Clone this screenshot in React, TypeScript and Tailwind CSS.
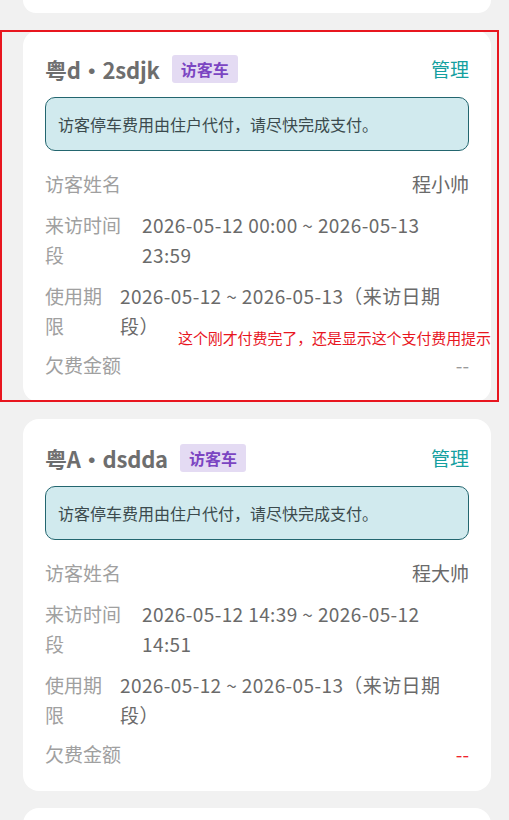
import React from 'react';

interface Visit {
  plate: string;
  name: string;
  visitTime: string;
  usePeriod: string;
  debtRed: boolean;
}

const visits: Visit[] = [
  {
    plate: '粤d・2sdjk',
    name: '程小帅',
    visitTime: '2026-05-12 00:00 ~ 2026-05-13 23:59',
    usePeriod: '2026-05-12 ~ 2026-05-13（来访日期段）',
    debtRed: false,
  },
  {
    plate: '粤A・dsdda',
    name: '程大帅',
    visitTime: '2026-05-12 14:39 ~ 2026-05-12 14:51',
    usePeriod: '2026-05-12 ~ 2026-05-13（来访日期段）',
    debtRed: true,
  },
];

const VisitCard = ({ v }: { v: Visit }) => (
  <div className="w-[468px] ml-[23px] bg-white rounded-[16px] px-[22px] pt-[25px] pb-[22px]">
    {/* header */}
    <div className="flex items-center justify-between h-[28px]">
      <div className="flex items-center">
        <span className="text-[22px] font-bold text-[#6e6e6e] tracking-[-0.2px]">{v.plate}</span>
        <span className="ml-[12px] h-[28px] px-[9px] rounded-[3px] bg-[#e4dbf3] text-[#7b45c2] text-[16px] font-bold leading-[28px]">
          访客车
        </span>
      </div>
      <span className="text-[19px] text-[#14a0a0]">管理</span>
    </div>

    {/* notice */}
    <div className="mt-[14px] h-[54px] border border-[#23666f] bg-[#d1eaee] rounded-[10px] px-[12px] flex items-center text-[16px] text-[#3b4a4d]">
      访客停车费用由住户代付，请尽快完成支付。
    </div>

    <div className="mt-[18px] flex flex-col gap-[10px] text-[19px] leading-[30.5px]">
      <div className="flex items-center justify-between">
        <span className="text-[#a0a0a0]">访客姓名</span>
        <span className="text-[#6a6a6a]">{v.name}</span>
      </div>
      <div className="flex items-start">
        <div className="w-[97px] pr-[17px] shrink-0 text-[#a0a0a0]">来访时间段</div>
        <div className="flex-1 pr-[8px] text-[#6a6a6a] tracking-[0.4px]">{v.visitTime}</div>
      </div>
      <div className="flex items-start">
        <div className="w-[75px] pr-[17px] shrink-0 text-[#a0a0a0]">使用期限</div>
        <div className="flex-1 text-[#6a6a6a] tracking-[0.4px]">{v.usePeriod}</div>
      </div>
      <div className="flex items-center justify-between -mt-[2px]">
        <span className="text-[#a0a0a0]">欠费金额</span>
        <span className={v.debtRed ? 'text-[#f0242c]' : 'text-[#9a9a9a]'}>--</span>
      </div>
    </div>
  </div>
);

export default function App() {
  return (
    <div
      className="relative min-h-screen bg-[#f1f1f1] overflow-hidden"
      style={{ fontFamily: '"Noto Sans CJK SC", "Noto Sans", sans-serif' }}
    >
      <div className="flex flex-col gap-[17px]">
        {/* previous card, scrolled mostly out of view */}
        <div className="w-[468px] ml-[23px] h-[13px] bg-white rounded-b-[16px]" />
        {visits.map((v) => (
          <VisitCard key={v.plate} v={v} />
        ))}
        <div className="w-[468px] ml-[23px] h-[40px] bg-white rounded-t-[16px]" />
      </div>

      {/* review annotation */}
      <div className="absolute left-0 top-[30px] w-[499px] h-[372px] border-2 border-[#e8161f] pointer-events-none" />
      <div className="absolute left-[178px] top-[327px] text-[15px] leading-[22px] text-[#e8161f] whitespace-nowrap tracking-[-0.1px]">
        这个刚才付费完了，还是显示这个支付费用提示
      </div>
    </div>
  );
}
